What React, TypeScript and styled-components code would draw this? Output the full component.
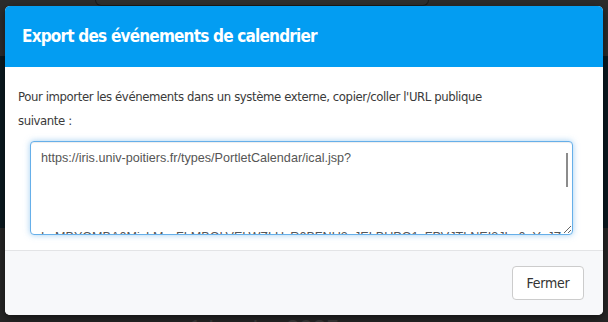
import React from 'react';
import styled, { createGlobalStyle } from 'styled-components';

const GlobalStyle = createGlobalStyle`
  html, body {
    margin: 0;
    padding: 0;
    background: #262626;
  }
  * {
    box-sizing: border-box;
  }
`;

const Page = styled.div`
  position: relative;
  width: 608px;
  height: 322px;
  overflow: hidden;
  display: flex;
  flex-direction: column;
  font-family: 'Liberation Sans', Arial, sans-serif;
`;

// page behind the overlay (already darkened)
const TopBar = styled.div`
  height: 56px;
  background: #2c2c2c;
  padding-left: 95px;
`;

const TopTab = styled.div`
  width: 334px;
  height: 6px;
  border: 1px solid #1b1b1b;
  border-top: none;
  border-radius: 0 0 12px 12px;
  background: #2f2f2f;
`;

const NavBand = styled.div`
  height: 172px;
  background: #0b1920;
`;

const BottomArea = styled.div`
  flex: 1;
  background: #262626;
  display: flex;
  align-items: flex-end;
  justify-content: center;
  padding-right: 80px;
`;

const DateLabel = styled.div`
  font-family: 'Liberation Sans', Arial, sans-serif;
  font-size: 24px;
  line-height: 24px;
  color: #3a3a3a;
  margin-bottom: -19px;
  white-space: pre;
`;

// modal
const Modal = styled.div`
  position: absolute;
  left: 5px;
  top: 6px;
  width: 598px;
  border-radius: 5px;
  overflow: hidden;
  background: #fff;
  box-shadow: 0 3px 9px rgba(0, 0, 0, 0.5);
  font-family: 'DejaVu Sans Condensed', 'Liberation Sans', sans-serif;
`;

const Header = styled.div`
  height: 61px;
  background: #039df2;
  display: flex;
  align-items: center;
  padding: 0 17px 1px;
`;

const Title = styled.h4`
  margin: 0;
  color: #fff;
  font-size: 17px;
  font-weight: 700;
  letter-spacing: -0.8px;
`;

const Body = styled.div`
  height: 183px;
  padding: 18px 13px 0;
`;

const Intro = styled.p`
  margin: 0;
  max-width: 500px;
  font-size: 13px;
  line-height: 24px;
  letter-spacing: -0.4px;
  color: #3a3a3a;
`;

const UrlField = styled.div`
  position: relative;
  margin: 8px 0 0 12px;
  width: 543px;
`;

const UrlBox = styled.textarea`
  display: block;
  width: 100%;
  height: 94px;
  padding: 3px 10px 6px;
  border: 1px solid #66afe9;
  border-radius: 4px;
  outline: none;
  box-shadow: inset 0 1px 1px rgba(0, 0, 0, 0.075), 0 0 6px rgba(102, 175, 233, 0.6);
  font-family: 'Liberation Sans', Arial, sans-serif;
  font-size: 12.6px;
  line-height: 26.4px;
  color: #555;
  resize: vertical;
  overflow-y: auto;
  word-break: break-all;
`;

// thin scrollbar thumb drawn over the textarea
const ScrollThumb = styled.span`
  position: absolute;
  top: 12px;
  right: 5px;
  width: 2px;
  height: 34px;
  background: #8c8c8c;
  pointer-events: none;
`;

const Footer = styled.div`
  height: 65px;
  background: #f7f8fa;
  border-top: 1px solid #e3e4e6;
  display: flex;
  align-items: flex-start;
  justify-content: flex-end;
  padding: 15px 19px 0;
`;

const Button = styled.button`
  height: 34px;
  width: 72px;
  padding: 0;
  background: #fff;
  border: 1px solid #ccc;
  border-radius: 4px;
  font-family: 'DejaVu Sans Condensed', 'Liberation Sans', sans-serif;
  font-size: 14px;
  letter-spacing: -0.2px;
  color: #333;
  cursor: pointer;
`;

const ICAL_URL =
  'https://iris.univ-poitiers.fr/types/PortletCalendar/ical.jsp?\n\n\nLaMBYOMBA0MjcLMzcFLMBQLVELWZLHzR0BFNU3zJELBUPO1zFPVJTLNEI3JLq0eYzJZk4ObQx2N0IxT1lPTUJBME1qY0xNemNGTE1CUUxWRUxXWkxIelIwQkZOVTN6SkVMQlVQTzF6RlBWSlRMTkVJM0pMcTBlWXpKWms0T2JReDJOMEl4VDFsUFRVSkJNRTFxWTB4TmVtTkdURTFDVVV4V1JVeFhXa3hJZWxJd1FrWk9WVE42U2tWTVFsVlFUekY2UmxCV1NsUk1Ua1ZKTTBwTWNUQmxXWHBLV21zMFQySlJlREpPTUVsNFZERnNVRlJWU2tKTlJURnhXVEI0VG1WdFRrZFVSVEZEVlZWNFYxSlZlRmhYYTNoSlpXeEpkMUZyV2s5V1ZFNDJVMnRXVFZGc1ZsRlVla1kyVW14Q1YxTnNVazFVYTFaS1RUQndUV05VUW14WFdIQkxWMjF6TUZReVNsSmxSRXBQVFVWc05GWkVSbk5WUmxKV1UydEtUbEpVUm5oWFZFSTBWRzFXZEZSclpGVlNWRVpFVmxaV05GWXhTbFpsUm1oWVlUTm9TbHBYZUVwa01VWnlWMnM1VjFaRlRqSlZNblJYVkZaR2MxWnNSbFZsYTFreVZXMTRRMVl4VG5OVmF6RlZZVEZhUzFSVVFuZFVWMDVWVVcxNFdGZElRa3hXTWpGNlRVWlJlVk5zU214U1JYQlFWRlZXYzA1R1drVlNiazVXVW14S1YxVXlkRXRVYkVwVlVtNW9XR1ZGU1RCV1J6RlhaRVpTY2xwR1ZsTldSVnBGVm14YVYwNUdXWGhUYkZwc1VtMW9XVmxVVG05VGJIQllaVVZ3YTAxVldUQlhNV2h5VjJGelQxWXhXa1pVYWtwV1RXNVNXRlpHV2tkak1WbzJVbXhTVjFaV1draFpNV2g0VVRGU1JrMVZXbFZsYTBwcg==';

export default function App() {
  return (
    <Page>
      <GlobalStyle />
      <TopBar>
        <TopTab />
      </TopBar>
      <NavBand />
      <BottomArea>
        <DateLabel>{'‹    1 janvier 2025    ›'}</DateLabel>
      </BottomArea>

      <Modal role="dialog">
        <Header>
          <Title>Export des événements de calendrier</Title>
        </Header>
        <Body>
          <Intro>
            Pour importer les événements dans un système externe, copier/coller l'URL publique suivante :
          </Intro>
          <UrlField>
            <UrlBox readOnly defaultValue={ICAL_URL} />
            <ScrollThumb />
          </UrlField>
        </Body>
        <Footer>
          <Button type="button">Fermer</Button>
        </Footer>
      </Modal>
    </Page>
  );
}
